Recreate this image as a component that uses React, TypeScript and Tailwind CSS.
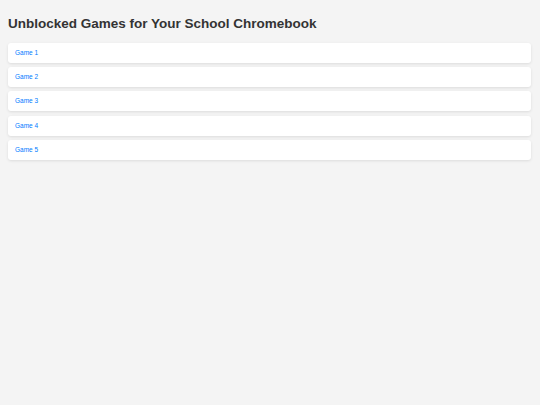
const games = ["Game 1", "Game 2", "Game 3", "Game 4", "Game 5"];

export default function App() {
  return (
    <div className="min-h-screen bg-[#f4f4f4] px-[8px] pt-[16px] pb-[8px] font-['Liberation_Sans',Arial,sans-serif]">
      <h1 className="mb-[11px] text-[13.5px] leading-[15.5px] font-bold text-[#333]">
        Unblocked Games for Your School Chromebook
      </h1>
      <ul className="flex w-[523px] flex-col gap-[4.4px]">
        {games.map((g) => (
          <li
            key={g}
            className="flex h-[20px] items-center rounded-[3px] bg-white px-[7px] shadow-[0_1px_3px_rgba(0,0,0,0.1)]"
          >
            <a href="#" className="text-[6.5px] leading-[8px] text-[#007bff]">
              {g}
            </a>
          </li>
        ))}
      </ul>
    </div>
  );
}
